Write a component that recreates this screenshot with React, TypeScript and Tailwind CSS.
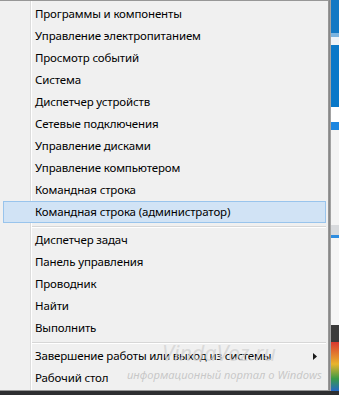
import React from 'react';

type Row = { label: string; active?: boolean; submenu?: boolean } | 'sep';

const rows: Row[] = [
  { label: 'Программы и компоненты' },
  { label: 'Управление электропитанием' },
  { label: 'Просмотр событий' },
  { label: 'Система' },
  { label: 'Диспетчер устройств' },
  { label: 'Сетевые подключения' },
  { label: 'Управление дисками' },
  { label: 'Управление компьютером' },
  { label: 'Командная строка' },
  { label: 'Командная строка (администратор)', active: true },
  'sep',
  { label: 'Диспетчер задач' },
  { label: 'Панель управления' },
  { label: 'Проводник' },
  { label: 'Найти' },
  { label: 'Выполнить' },
  'sep',
  { label: 'Завершение работы или выход из системы', submenu: true },
  { label: 'Рабочий стол' },
];

const MenuItem: React.FC<{ label: string; active?: boolean; submenu?: boolean }> = ({ label, active, submenu }) => (
  <div
    className={
      'relative z-10 ml-[3px] mr-[2px] flex h-[22px] items-center justify-between border pl-[31px] pr-[8px] text-[11.5px] leading-[20px] tracking-[-0.15px] text-black ' +
      (active ? 'border-[#99c4ec] bg-[#d1e3f5]' : 'border-transparent')
    }
  >
    <span className="whitespace-nowrap">{label}</span>
    {submenu && (
      <svg width="4" height="7" viewBox="0 0 4 7" className="block">
        <polygon points="0,0 4,3.5 0,7" fill="#1a1a1a" />
      </svg>
    )}
  </div>
);

const Separator = () => (
  <div className="ml-[31px] mr-[2px] h-[6px] pt-[3px]">
    <div className="h-px bg-[#d7d7d7]" />
    <div className="h-px bg-white" />
  </div>
);

const DesktopStrip = () => (
  <div className="flex w-[8px] flex-col">
    <div className="h-[33px] bg-[#1479c4]" />
    <div className="h-[4px] bg-[#7bb4e0]" />
    <div className="h-[8px] bg-[#eef3f8]" />
    <div className="h-[62px] bg-[#0a78c8]" />
    <div className="h-[15px] bg-white" />
    <div className="h-[8px] bg-[#1c86e0]" />
    <div className="h-[95px] bg-[#f4f4f4]" />
    <div className="h-[10px] bg-[#d8dadd]" />
    <div className="h-[3px] bg-[#2f8de0]" />
    <div className="h-[87px] bg-[#f6f6f6]" />
    <div className="h-[17px] bg-[#3a3a3a]" />
    <div className="flex-1 bg-[linear-gradient(180deg,#d9382f_0%,#e9b42c_45%,#3a9a47_75%,#2569c7_100%)]" />
  </div>
);

export default function App() {
  return (
    <div className="flex h-[395px] w-[339px] flex-col overflow-hidden bg-[#333436] font-['Segoe_UI','Noto_Sans',sans-serif]">
      <div className="flex h-[391px]">
        <div className="relative w-[329px] border-r border-t border-b border-[#979797] bg-[#f0f0f0] pt-[2px]">
          <div className="absolute bottom-0 left-[30px] top-0 w-px bg-[#dcdcdc]" />
          <div className="absolute bottom-0 left-[31px] top-0 w-px bg-white" />
          {rows.map((r, i) =>
            r === 'sep' ? <Separator key={i} /> : <MenuItem key={i} {...r} />
          )}
          <div className="pointer-events-none absolute left-[162px] top-[341px] z-20 whitespace-nowrap text-[21.5px] italic leading-none text-[#d3d3d3]/80">
            VindaVoz.ru
          </div>
          <div className="pointer-events-none absolute left-[127px] top-[368px] z-20 whitespace-nowrap text-[11.2px] italic leading-none text-[#bdbdbd]/80">
            информационный портал о Windows
          </div>
        </div>
        <div className="w-[2px] bg-[linear-gradient(90deg,#7a7a7a,#b0b0b0)]" />
        <DesktopStrip />
      </div>
      <div className="flex-1 bg-[#2e2f31]" />
    </div>
  );
}
